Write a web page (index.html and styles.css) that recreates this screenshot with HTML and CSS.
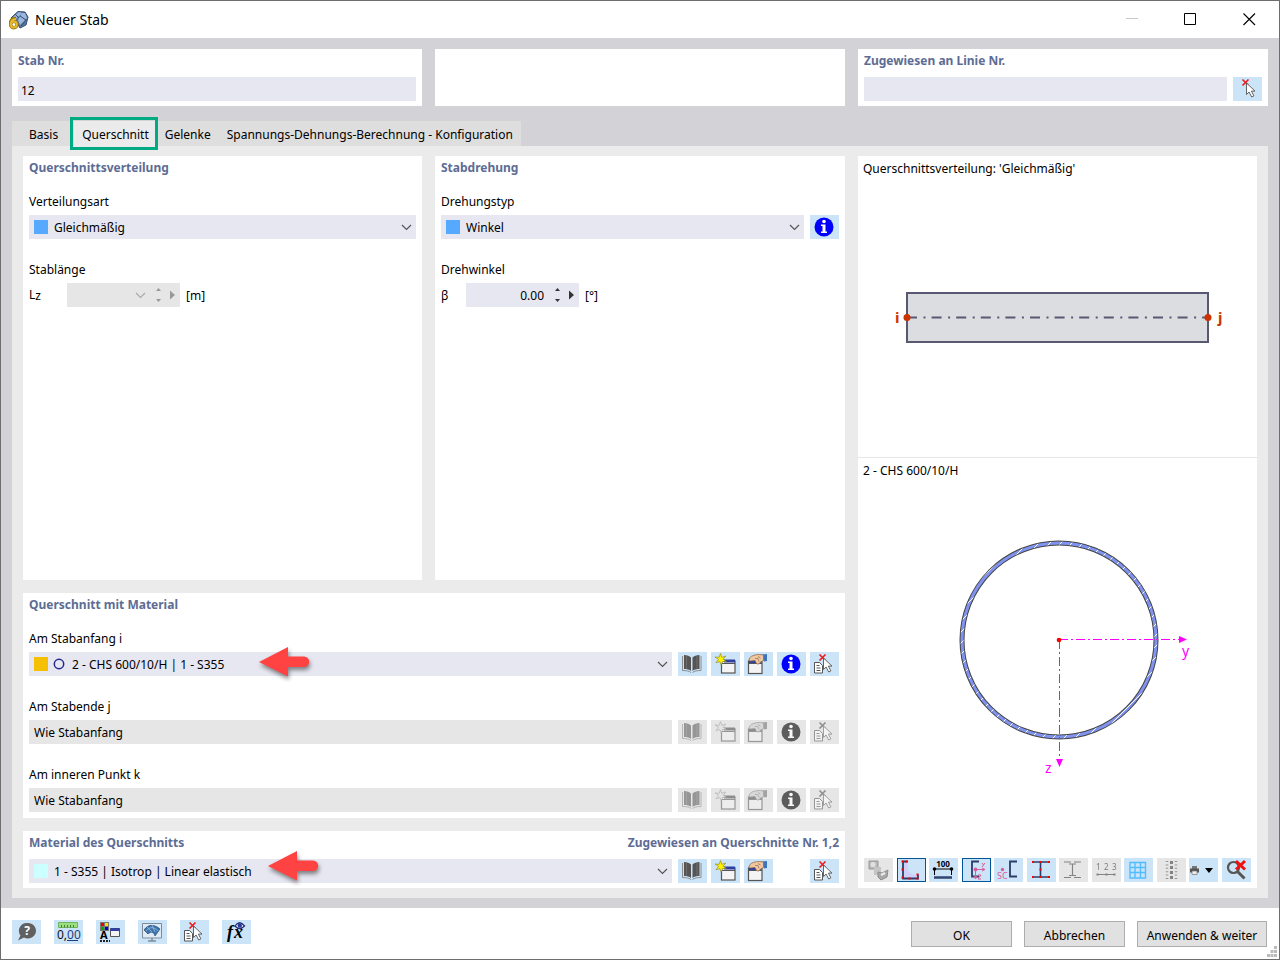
FILE: index.html
```html
<!DOCTYPE html>
<html lang="de">

<head>
    <meta charset="UTF-8">
    <meta name="viewport" content="width=device-width, initial-scale=1.0">
    <title>Neuer Stab</title>

    <link rel="stylesheet" href="styles.css">

</head>

<body>

    <!-- shared icons -->
    <svg class="sprite" aria-hidden="true">
        <symbol id="chevron" viewBox="0 0 11 7">
            <path d="M1 1l4.500 4.500L10 1" fill="none" stroke="currentColor" stroke-width="1.2"/>
        </symbol>

        <symbol id="info" viewBox="0 0 29 24">
            <circle cx="14" cy="12" r="9.500" fill="currentColor"/>
            <circle cx="14" cy="6.500" r="1.800" fill="#fff"/>
            <path d="M11 9.500h4.500v7H17V18h-6v-1.500h1.500V11H11z" fill="#fff"/>
        </symbol>

        <symbol id="book" viewBox="0 0 29 24">
            <path d="M6 3c3 0 5.500 1 7 2.500V19c-1.500-1.500-4-2-7-2zM21.500 3c-3 0-5.500 1-7 2.500V19c1.500-1.500 4-2 7-2z" fill="#555"/>
            <path d="M4.500 4v14.500c4 0 6.500.5 8.500 2M23 4v14.500c-4 0-6.500.5-8.500 2" fill="none" stroke="#777" stroke-width=".8"/>
            <path d="M8.500 4v12.500M19 4v12.500" stroke="#8b8b8b" stroke-width=".5"/>
        </symbol>

        <symbol id="new" viewBox="0 0 29 24">
            <rect x="10.500" y="9" width="13.500" height="12" fill="#f4f4f4" stroke="#555" stroke-width="1.200"/>
            <path d="M13 7.500h11v3H13z" fill="#2f3fa0"/>
            <path d="M10.500 11.500H24" stroke="#555"/>
            <path d="M9.500 1.500l1.300 3.800 3.900-1.300-2.500 3.300 3.200 2-3.800.3-1.400 3.500-1.300-3.500-3.900 1.100 2.500-3.300-3.500-2.400 4.200.3z" fill="#fff200" stroke="#8a7d20" stroke-width=".6"/>
        </symbol>

        <symbol id="edit" viewBox="0 0 29 24">
            <rect x="4.500" y="9" width="13.500" height="12.500" fill="#f4f4f4" stroke="#555" stroke-width="1.200"/>
            <path d="M5 8h12.500v3H5z" fill="#2f3fa0"/>
            <path d="M4.500 11.500H18" stroke="#555"/>
            <path d="M18 2.500l5-.500v7l-3 .5z" fill="#3f74bd"/>
            <path d="M5.500 6c2-2.500 6-3.500 10-3.500l4 .5v5.500l-3 1.500c-.5 2-3 2.500-4 1.500l-1.500-3-4.500.5c-1.500 0-2-1-1-2z" fill="#f1c7a0" stroke="#8f6848" stroke-width=".8"/>
            <path d="M11 6.500h3l1 3M14 4.500l2.500 1.500" fill="none" stroke="#8f6848" stroke-width=".7"/>
        </symbol>

        <symbol id="pick" viewBox="0 0 29 24">
            <path d="M4.500 10.500h5l3 3v7.500h-8z" fill="#fff" stroke="#555"/>
            <path d="M6.500 13.500h3M6.500 16h4M6.500 18.500h4" stroke="#555"/>
            <path d="M9.500 2.500l6 6M15.500 2.500l-6 6" stroke="#f01818" stroke-width="1.600"/>
            <path d="M13.500 6v11.500l2.600-2.500 2.600 5 2.200-1.100-2.500-4.800H22z" fill="#fff" stroke="#555" stroke-width=".9"/>
        </symbol>

        <symbol id="deselect" viewBox="0 0 29 24">
            <path d="M9.500 2.500l6 6M15.500 2.500l-6 6" stroke="#f01818" stroke-width="1.600"/>
            <path d="M13.500 6v11.500l2.600-2.500 2.600 5 2.200-1.100-2.500-4.800H22z" fill="#fff" stroke="#555" stroke-width=".9"/>
        </symbol>

        <symbol id="arrow" viewBox="0 0 54 36">
            <path d="M1 16L30 1v9.500h16a5 5 0 0 1 0 10.500H30v9.500z" fill="#ff4343"/>
        </symbol>
    </svg>

    <div class="window">

        <header class="titlebar">
            <svg class="app-icon" viewBox="0 0 20 20" aria-hidden="true">
                <path d="M2 8L9 1.500l7 .5 3 5-2 8-6 3-3-5z" fill="#56779f" stroke="#344c72"/>
                <path d="M3 8l7-6 3 1-7 7zM13 3l3 0 2 5-7 7-2-5z" fill="#9bb7dd"/>
                <path d="M11 6l6 4-5 6M6 4l4 4" stroke="#344c72" fill="none"/>
                <path d="M7 8.500Q1.500 8 1.500 14.500" fill="none" stroke="#94730d" stroke-width="3.500"/>
                <circle cx="4.800" cy="14.500" r="3.200" fill="none" stroke="#94730d" stroke-width="3.400"/>
                <path d="M7 9Q2 9 1.800 14.500" fill="none" stroke="#e6bb28" stroke-width="2"/>
                <circle cx="4.800" cy="14.500" r="3" fill="none" stroke="#e6bb28" stroke-width="2"/>
            </svg>
            <h1>Neuer Stab</h1>
            <div class="window-controls">
                <button type="button" aria-label="Minimieren" disabled>
                    <svg viewBox="0 0 13 13"><path d="M1 5.500h12" stroke="#c8c8c8"/></svg>
                </button>
                <button type="button" aria-label="Maximieren">
                    <svg viewBox="0 0 13 13"><path d="M.5.500h11v11H.5z" fill="none" stroke="#000"/></svg>
                </button>
                <button type="button" aria-label="Schließen">
                    <svg viewBox="0 0 13 13"><path d="M.5.500l11.500 11.500M12 .5L.5 12" stroke="#000" stroke-width="1.100"/></svg>
                </button>
            </div>
        </header>

        <main class="content">

            <div class="top-row">
                <section class="panel compact">
                    <label class="heading" for="member-no">Stab Nr.</label>
                    <input class="field" id="member-no" type="text" value="12">
                </section>
                <section class="panel compact"></section>
                <section class="panel compact">
                    <label class="heading" for="line-no">Zugewiesen an Linie Nr.</label>
                    <div class="row">
                        <input class="field" id="line-no" type="text">
                        <button type="button" class="icon-btn" aria-label="Linie wählen"><svg><use href="#deselect"/></svg></button>
                    </div>
                </section>
            </div>

            <div class="tabs" role="tablist">
                <button type="button" class="tab" role="tab">Basis</button>
                <button type="button" class="tab active" role="tab" aria-selected="true">Querschnitt<span class="highlight"></span></button>
                <button type="button" class="tab" role="tab">Gelenke</button>
                <button type="button" class="tab" role="tab">Spannungs-Dehnungs-Berechnung - Konfiguration</button>
            </div>

            <div class="tab-page">

                <section class="panel">
                    <h2 class="heading">Querschnittsverteilung</h2>
                    <div class="group">
                        <label for="distribution">Verteilungsart</label>
                        <div class="combo">
                            <span class="swatch blue"></span>
                            <select id="distribution"><option>Gleichmäßig</option></select>
                            <svg class="chevron"><use href="#chevron"/></svg>
                        </div>
                    </div>
                    <div class="group">
                        <span class="label">Stablänge</span>
                        <div class="number-row">
                            <label class="length-label" for="length">L<small>z</small></label>
                            <div class="spin disabled">
                                <input id="length" type="text" disabled>
                                <svg class="chevron"><use href="#chevron"/></svg>
                                <svg class="steps" viewBox="0 0 20 16"><path d="M1 4l2.500-3L6 4zM1 12l2.500 3L6 12zM15 3.500l5 4.500-5 4.500z"/></svg>
                            </div>
                            <span>[m]</span>
                        </div>
                    </div>
                </section>

                <section class="panel">
                    <h2 class="heading">Stabdrehung</h2>
                    <div class="group">
                        <label for="rotation">Drehungstyp</label>
                        <div class="row">
                            <div class="combo">
                                <span class="swatch blue"></span>
                                <select id="rotation"><option>Winkel</option></select>
                                <svg class="chevron"><use href="#chevron"/></svg>
                            </div>
                            <button type="button" class="icon-btn info" aria-label="Info"><svg><use href="#info"/></svg></button>
                        </div>
                    </div>
                    <div class="group">
                        <span class="label">Drehwinkel</span>
                        <div class="number-row">
                            <label class="angle-label" for="angle">β</label>
                            <div class="spin">
                                <input id="angle" type="text" value="0.00">
                                <svg class="steps" viewBox="0 0 20 16"><path d="M1 4l2.500-3L6 4zM1 12l2.500 3L6 12zM15 3.500l5 4.500-5 4.500z"/></svg>
                            </div>
                            <span>[°]</span>
                        </div>
                    </div>
                </section>

                <section class="panel wide">
                    <h2 class="heading">Querschnitt mit Material</h2>
                    <div class="group">
                        <label for="section-i">Am Stabanfang i</label>
                        <div class="row">
                            <div class="combo">
                                <span class="swatch orange"></span>
                                <svg class="ring" viewBox="0 0 12 12"><circle cx="5" cy="6" r="4.700" fill="none" stroke="#26268c" stroke-width="1.500"/></svg>
                                <select id="section-i"><option>2 - CHS 600/10/H | 1 - S355</option></select>
                                <svg class="chevron"><use href="#chevron"/></svg>
                                <svg class="arrow first" viewBox="0 0 54 36"><use href="#arrow"/></svg>
                            </div>
                            <div class="buttons">
                                <button type="button" class="icon-btn" aria-label="Bibliothek"><svg><use href="#book"/></svg></button>
                                <button type="button" class="icon-btn" aria-label="Neu"><svg><use href="#new"/></svg></button>
                                <button type="button" class="icon-btn" aria-label="Bearbeiten"><svg><use href="#edit"/></svg></button>
                                <button type="button" class="icon-btn info" aria-label="Info"><svg><use href="#info"/></svg></button>
                                <button type="button" class="icon-btn" aria-label="Auswählen"><svg><use href="#pick"/></svg></button>
                            </div>
                        </div>
                    </div>
                    <div class="group">
                        <label for="section-j">Am Stabende j</label>
                        <div class="row">
                            <div class="combo disabled">
                                <select id="section-j" disabled><option>Wie Stabanfang</option></select>
                            </div>
                            <div class="buttons">
                                <button type="button" class="icon-btn" aria-label="Bibliothek" disabled><svg><use href="#book"/></svg></button>
                                <button type="button" class="icon-btn" aria-label="Neu" disabled><svg><use href="#new"/></svg></button>
                                <button type="button" class="icon-btn" aria-label="Bearbeiten" disabled><svg><use href="#edit"/></svg></button>
                                <button type="button" class="icon-btn info" aria-label="Info" disabled><svg><use href="#info"/></svg></button>
                                <button type="button" class="icon-btn" aria-label="Auswählen" disabled><svg><use href="#pick"/></svg></button>
                            </div>
                        </div>
                    </div>
                    <div class="group">
                        <label for="section-k">Am inneren Punkt k</label>
                        <div class="row">
                            <div class="combo disabled">
                                <select id="section-k" disabled><option>Wie Stabanfang</option></select>
                            </div>
                            <div class="buttons">
                                <button type="button" class="icon-btn" aria-label="Bibliothek" disabled><svg><use href="#book"/></svg></button>
                                <button type="button" class="icon-btn" aria-label="Neu" disabled><svg><use href="#new"/></svg></button>
                                <button type="button" class="icon-btn" aria-label="Bearbeiten" disabled><svg><use href="#edit"/></svg></button>
                                <button type="button" class="icon-btn info" aria-label="Info" disabled><svg><use href="#info"/></svg></button>
                                <button type="button" class="icon-btn" aria-label="Auswählen" disabled><svg><use href="#pick"/></svg></button>
                            </div>
                        </div>
                    </div>
                </section>

                <section class="panel wide compact">
                    <div class="heading-row">
                        <label class="heading" for="material">Material des Querschnitts</label>
                        <span class="heading">Zugewiesen an Querschnitte Nr. 1,2</span>
                    </div>
                    <div class="row">
                        <div class="combo">
                            <span class="swatch cyan"></span>
                            <select id="material"><option>1 - S355 | Isotrop | Linear elastisch</option></select>
                            <svg class="chevron"><use href="#chevron"/></svg>
                            <svg class="arrow second" viewBox="0 0 54 36"><use href="#arrow"/></svg>
                        </div>
                        <div class="buttons">
                            <button type="button" class="icon-btn" aria-label="Bibliothek"><svg><use href="#book"/></svg></button>
                            <button type="button" class="icon-btn" aria-label="Neu"><svg><use href="#new"/></svg></button>
                            <button type="button" class="icon-btn" aria-label="Bearbeiten"><svg><use href="#edit"/></svg></button>
                            <button type="button" class="icon-btn last" aria-label="Auswählen"><svg><use href="#pick"/></svg></button>
                        </div>
                    </div>
                </section>

                <aside class="preview">
                    <div class="view">
                        <p>Querschnittsverteilung: 'Gleichmäßig'</p>
                        <svg viewBox="0 0 399 277">
                            <rect x="49" y="113" width="301" height="49" fill="#dcdde1" stroke="#585872" stroke-width="2"/>
                            <path d="M49 137.500h301" stroke="#585872" stroke-width="2" stroke-dasharray="10 6.500 2 6.100"/>
                            <circle cx="49" cy="137.500" r="3.500" fill="#cc3300"/>
                            <circle cx="350" cy="137.500" r="3.500" fill="#cc3300"/>
                            <text class="node" x="37" y="143">i</text>
                            <text class="node" x="360" y="143">j</text>
                        </svg>
                    </div>
                    <div class="view">
                        <p>2 - CHS 600/10/H</p>
                        <svg viewBox="0 0 399 350">
                            <defs>
                                <pattern id="hatch" width="11" height="11" patternUnits="userSpaceOnUse">
                                    <path d="M0 0h11v11H0z" fill="#8093f0"/>
                                    <path d="M-1 12L12-1M-1 1l2-2M10 12l2-2" stroke="#fff" stroke-width="1"/>
                                </pattern>
                            </defs>
                            <circle cx="201" cy="158" r="97" fill="none" stroke="#444" stroke-width="5"/>
                            <circle cx="201" cy="158" r="97" fill="none" stroke="url(#hatch)" stroke-width="3"/>
                            <path d="M201 157.500h120M201.500 158v117" stroke="#f0f" stroke-dasharray="9 3 2 3"/>
                            <path d="M321 154l8 3.500-8 3.500zM198 277h7l-3.500 8z" fill="#f0f"/>
                            <circle cx="201" cy="158" r="2.300" fill="#f00"/>
                            <text class="axis" x="324" y="174">y</text>
                            <text class="axis" x="187" y="291">z</text>
                        </svg>
                    </div>

                    <div class="toolbar">
                        <button type="button" class="icon-btn" aria-label="Darstellung" disabled>
                            <svg viewBox="0 0 29 24"><path d="M5 3h9v8H5z" fill="#999" stroke="#555"/><circle cx="9" cy="6.500" r="2.500" fill="#ddd"/><path d="M10 9h7v8h-7z" fill="#aaa"/><path d="M14 14l4 1 6-3-1 7-6 3-3-3z" fill="#777" stroke="#444"/><path d="M17 17l4-2" stroke="#eee" stroke-width="2"/></svg>
                        </button>
                        <button type="button" class="icon-btn on" aria-label="Umriss">
                            <svg viewBox="0 0 29 24"><path d="M6 3.500h4l1 9 4 4h5v4H6z" fill="#cfd0fa"/><path d="M11 3.500H6v17h15v-4" fill="none" stroke="#2c3c68" stroke-width="1.800"/><path d="M4.500 2.500h2v2h-2zm4 0h2v2h-2zm-4 8h2v2h-2zm0 8h2v2h-2zm7 1h2v2h-2zm8 0h2v2h-2zm0-4h2v2h-2z" fill="#f00"/></svg>
                        </button>
                        <button type="button" class="icon-btn" aria-label="Maße">
                            <svg viewBox="0 0 29 24"><text x="14" y="9" text-anchor="middle" class="dim">100</text><path d="M5.500 17v-7M22.500 17v-7M5 11h18" stroke="#000"/><circle cx="5.500" cy="11" r="1.800"/><circle cx="22.500" cy="11" r="1.800"/><path d="M5 19.500h18" stroke="#304570" stroke-width="2.500"/></svg>
                        </button>
                        <button type="button" class="icon-btn on" aria-label="Hauptachsen">
                            <svg viewBox="0 0 29 24"><path d="M17 3.500h-7v15h7" fill="none" stroke="#2c3c68" stroke-width="1.800"/><circle cx="13.500" cy="11.500" r="1.900" fill="#d85f9d"/><path d="M14 11.500h9M13.500 12v8" stroke="#d85f9d"/><path d="M20 10l3 1.500-3 1.500M12 18l1.500 3 1.500-3M20 5l1.500 2L23 5M21.500 7L20 9M16 17h3l-3 4h3" fill="none" stroke="#d85f9d"/></svg>
                        </button>
                        <button type="button" class="icon-btn" aria-label="Schubmittelpunkt">
                            <svg viewBox="0 0 29 24"><path d="M23 3.500h-7v15h7" fill="none" stroke="#2c3c68" stroke-width="1.800"/><circle cx="8.500" cy="11.500" r="1.700" fill="#d85f9d"/><text x="3" y="21" class="sc">SC</text></svg>
                        </button>
                        <button type="button" class="icon-btn" aria-label="Spannungspunkte">
                            <svg viewBox="0 0 29 24"><path d="M6 4h16M6 19h16M13.500 4v15" stroke="#2c3c68" stroke-width="1.600"/><path d="M5 3h2v2H5zm7.500 0h2v2h-2zM21 3h2v2h-2zm-8.500 7.500h2v2h-2zM5 18h2v2H5zm7.500 0h2v2h-2zM21 18h2v2h-2z" fill="#f00"/></svg>
                        </button>
                        <button type="button" class="icon-btn" aria-label="Querschnittsteile" disabled>
                            <svg viewBox="0 0 29 24"><path d="M5 4h7M15 4h7M5 19.500h7M15 19.500h7M10 6h7M10 17.500h7M13.500 6v11.500" stroke="#333" stroke-width="1.200"/></svg>
                        </button>
                        <button type="button" class="icon-btn" aria-label="Nummerierung" disabled>
                            <svg viewBox="0 0 29 24"><text x="4" y="12" class="nums">1</text><text x="12" y="12" class="nums">2</text><text x="20" y="12" class="nums">3</text><path d="M5 16.500h18" stroke="#333"/><path d="M4.500 15.500h2v2h-2zm9 0h2v2h-2zm8 0h2v2h-2z" fill="#333"/></svg>
                        </button>
                        <button type="button" class="icon-btn" aria-label="Raster">
                            <svg viewBox="0 0 29 24"><path d="M6 4.500h15.500v15.500H6zM11 4.500v15.500M16.500 4.500v15.500M6 9.500h15.500M6 14.500h15.500" fill="none" stroke="#51bdff" stroke-width="1.400"/></svg>
                        </button>
                        <button type="button" class="icon-btn" aria-label="Werte" disabled>
                            <svg viewBox="0 0 29 24"><path d="M14.500 3v18" stroke="#333" stroke-width="3" stroke-dasharray="3 2"/><path d="M10 3v18M19 3v18" stroke="#555" stroke-width="2.500" stroke-dasharray="1 2.400"/></svg>
                        </button>
                        <button type="button" class="icon-btn" aria-label="Drucken">
                            <svg viewBox="0 0 29 24"><path d="M3 8h5v3H3z" fill="#777"/><path d="M1 10.500h9v4H1z" fill="#555"/><path d="M3 13h5v3.500H3z" fill="#eee" stroke="#777" stroke-width=".7"/><path d="M16 10h8l-4 5z" fill="#000"/></svg>
                        </button>
                        <button type="button" class="icon-btn" aria-label="Zoom zurücksetzen">
                            <svg viewBox="0 0 29 24"><circle cx="11.500" cy="9.500" r="5.500" fill="none" stroke="#555" stroke-width="2.200"/><path d="M15.500 13.500l7 7" stroke="#555" stroke-width="3"/><path d="M14 3l9 8.500M23 3l-9 8.500" stroke="#f01010" stroke-width="3"/></svg>
                        </button>
                    </div>
                </aside>

            </div>
        </main>

        <footer class="footer">
            <button type="button" class="icon-btn" aria-label="Hilfe">
                <svg viewBox="0 0 29 24"><path d="M15 3a8 7.800 0 1 1-3 14.500L6 20.500l2.500-5A8 7.800 0 0 1 15 3z" fill="#606060"/><text x="15" y="15" text-anchor="middle" class="help">?</text></svg>
            </button>
            <button type="button" class="icon-btn" aria-label="Einheiten">
                <svg viewBox="0 0 29 24"><path d="M4.500 2.500h19v5h-19z" fill="#9ae080" stroke="#70b35c"/><path d="M7.500 5v2.500M10.500 5v2.500M13.500 5v2.500M16.500 5v2.500M19.500 5v2.500" stroke="#4c7b3e"/><text x="3" y="19" class="units">0,<tspan fill="#203f80">00</tspan></text><path d="M13 20.500h11" stroke="#203f80"/></svg>
            </button>
            <button type="button" class="icon-btn" aria-label="Anzeige">
                <svg viewBox="0 0 29 24"><path d="M4 2h9v9H4z" fill="#777"/><path d="M5 3h3v3H5z" fill="#e00"/><path d="M9 3h3v3H9z" fill="#fd0"/><path d="M5 7h3v3H5z" fill="#0a0"/><path d="M9 7h3v3H9z" fill="#00d"/><text x="4" y="19" class="letter">A</text><path d="M4 21h10" stroke="#222" stroke-width="2" stroke-dasharray="2 1"/><path d="M14.500 8.500h9v8h-9z" fill="#f4f4f4" stroke="#555"/><path d="M14.500 8h9v3h-9z" fill="#2f3fa0"/></svg>
            </button>
            <button type="button" class="icon-btn" aria-label="Ansicht">
                <svg viewBox="0 0 29 24"><path d="M4.500 3.500h19v14.500h-19z" fill="#deebf7" stroke="#7d8b99"/><path d="M14 18v3M10 21h8" stroke="#7d8b99" stroke-width="1.500"/><path d="M6 10c4-6 10-6 16-1l-5 7c-1-4-4-5-7-2z" fill="#3d75ad" stroke="#274c75" stroke-width=".7"/><path d="M9 7l5 5M14 5l3 7M8 11c4-5 8-4 12 0" fill="none" stroke="#a8c7e5" stroke-width=".7"/></svg>
            </button>
            <button type="button" class="icon-btn" aria-label="Auswählen"><svg><use href="#pick"/></svg></button>
            <button type="button" class="icon-btn" aria-label="Formel">
                <svg viewBox="0 0 29 24"><text x="5" y="18" class="fx">f</text><text x="12" y="18" class="fx">x</text><path d="M13 6q4.500-6.500 9.500 0q-5 5-9.500 0z" fill="#fff" stroke="#222a70" stroke-width="1.300"/><circle cx="17.800" cy="5.500" r="2.200" fill="#26389a"/></svg>
            </button>

            <div class="actions">
                <button type="button">OK</button>
                <button type="button">Abbrechen</button>
                <button type="button" class="long">Anwenden &amp; weiter</button>
            </div>
            <svg class="grip" viewBox="0 0 10 11" aria-hidden="true"><path d="M7 0h3v3H7zM3.500 4h3v3h-3zM7 4h3v3H7zM0 8h3v3H0zM3.500 8h3v3h-3zM7 8h3v3H7z" fill="#bbb"/></svg>
        </footer>

    </div>

</body>
</html>
```
FILE: styles.css
```css
:root {
    --field: #e6e7f1;
    --disabled: #e6e6e6;
    --button: #cce4f7;
    --heading: #5d6c94;
}

* {
    padding: 0;
    margin: 0;
    box-sizing: border-box;
}

body {
    font-family: "Noto Sans", "Open Sans", sans-serif;
    font-size: 12px;
    color: #000;
}

button,
input,
select {
    font: inherit;
    color: inherit;
    border: none;
    background: none;
}

svg {
    display: block;
}

.sprite {
    position: absolute;
    width: 0;
    height: 0;
}

.window {
    min-height: 100vh;
    display: flex;
    flex-direction: column;
    border: 1px solid #6d6d70;
    background: #fff;
}

/* title bar */
.titlebar {
    display: flex;
    align-items: center;
    height: 37px;
    padding-left: 8px;
}

.app-icon {
    width: 20px;
    height: 20px;
    margin-right: 6px;
}

.titlebar h1 {
    font-size: 14px;
    font-weight: normal;
}

.window-controls {
    display: flex;
    margin-left: auto;
}

.window-controls button {
    width: 59px;
    height: 36px;
    display: flex;
    align-items: center;
    justify-content: center;
}

.window-controls svg {
    width: 13px;
    height: 13px;
}

/* content */
.content {
    flex: 1;
    display: flex;
    flex-direction: column;
    padding: 11px 11px 10px;
    background: #d2d2d7;
}

.top-row {
    display: grid;
    grid-template-columns: repeat(3, 1fr);
    gap: 13px;
}

.panel {
    background: #fff;
    padding: 0 6px 6px;
}

.panel.compact {
    padding-bottom: 5px;
}

.heading {
    display: block;
    height: 24px;
    margin-bottom: 10px;
    line-height: 24px;
    font-size: 12px;
    font-weight: bold;
    color: var(--heading);
}

.compact .heading {
    margin-bottom: 4px;
}

.heading-row {
    display: flex;
    justify-content: space-between;
}

.group + .group {
    margin-top: 19px;
}

.group > label,
.group > .label {
    display: block;
    padding-bottom: 2px;
    line-height: 23px;
}

.row {
    display: flex;
    gap: 6px;
}

.field {
    width: 100%;
    height: 24px;
    padding: 2px 3px 0;
    background: var(--field);
}

.row .field {
    flex: 1;
    min-width: 0;
}

.combo {
    position: relative;
    flex: 1;
    display: flex;
    align-items: center;
    gap: 6px;
    height: 24px;
    padding: 0 4px 0 5px;
    background: var(--field);
}

.combo select {
    flex: 1;
    min-width: 0;
    height: 24px;
    appearance: none;
    opacity: 1;
}

.disabled {
    background: var(--disabled);
}

.chevron {
    width: 11px;
    height: 7px;
    color: #555;
    pointer-events: none;
}

.swatch {
    width: 14px;
    height: 14px;
}

.blue {
    background: #55aaff;
}

.orange {
    background: #f5c000;
}

.cyan {
    background: #ccffff;
}

.ring {
    width: 12px;
    height: 12px;
    overflow: visible;
}

.buttons {
    display: flex;
    gap: 4px;
    width: 161px;
}

.buttons .last {
    margin-left: auto;
}

.icon-btn {
    flex: none;
    width: 29px;
    height: 24px;
    background: var(--button);
}

.icon-btn svg {
    width: 29px;
    height: 24px;
}

.icon-btn.info {
    color: #0000ff;
}

.icon-btn:disabled {
    background: var(--disabled);
}

.icon-btn:disabled svg {
    filter: grayscale(1);
    opacity: .55;
}

.icon-btn.info:disabled {
    color: #222;
}

.icon-btn.info:disabled svg {
    opacity: .7;
}

.icon-btn.on {
    box-shadow: inset 0 0 0 1px #005499;
}

/* red pointers over the two lists */
.arrow {
    position: absolute;
    width: 54px;
    height: 36px;
    pointer-events: none;
    filter: drop-shadow(1px 3px 2px rgba(0, 0, 0, .45));
}

.arrow.first {
    left: 229px;
    top: -6px;
}

.arrow.second {
    left: 238px;
    top: -9px;
}

/* number boxes */
.number-row {
    display: flex;
    align-items: center;
}

.number-row small {
    font-size: 12px;
    vertical-align: -1px;
}

.length-label {
    width: 38px;
}

.angle-label {
    width: 25px;
}

.spin {
    display: flex;
    align-items: center;
    width: 113px;
    height: 24px;
    margin-right: 6px;
    padding-right: 5px;
    background: var(--field);
}

.spin input {
    flex: 1;
    min-width: 0;
    height: 24px;
    padding-right: 10px;
    text-align: right;
}

.steps {
    width: 20px;
    height: 16px;
    fill: #333;
}

.spin.disabled {
    background: var(--disabled);
}

.spin.disabled .chevron {
    margin-right: 9px;
    color: #aaa;
}

.spin.disabled .steps {
    fill: #999;
}

/* tabs */
.tabs {
    display: flex;
    align-self: flex-start;
    height: 25px;
    margin-top: 15px;
    padding-left: 9px;
    background: #dedede;
}

.tab {
    padding: 2px 8px 0;
}

.tab.active {
    position: relative;
    margin-left: 8px;
    background: #ebebeb;
}

.highlight {
    position: absolute;
    inset: -4px -1px -4px -4px;
    border: 3px solid #00ab84;
}

.tab-page {
    flex: 1;
    display: grid;
    grid-template-columns: 399fr 410fr 399fr;
    grid-template-rows: 1fr auto auto;
    gap: 13px;
    padding: 10px 11px;
    background: #ebebeb;
}

.wide {
    grid-column: 1 / 3;
}

/* preview */
.preview {
    grid-column: 3;
    grid-row: 1 / 4;
    display: flex;
    flex-direction: column;
    background: #fff;
}

.view + .view {
    border-top: 1px solid #e6e6e6;
}

.view p {
    height: 24px;
    padding-left: 5px;
    line-height: 26px;
}

.view svg {
    width: 100%;
}

.node {
    font-size: 15px;
    font-weight: bold;
    fill: #cc3300;
}

.axis {
    font-size: 14px;
    fill: #ff00ff;
}

.toolbar {
    display: flex;
    justify-content: space-between;
    margin-top: auto;
    padding: 0 6px 6px;
}

.dim {
    font-size: 8px;
    font-weight: bold;
}

.sc {
    font-size: 9px;
    fill: #d85f9d;
}

.nums {
    font-size: 8px;
    fill: #222;
}

/* footer */
.footer {
    position: relative;
    display: flex;
    align-items: flex-start;
    gap: 13px;
    height: 51px;
    padding: 12px 12px 0 11px;
}

.help {
    font-size: 12px;
    font-weight: bold;
    fill: #fff;
}

.units {
    font-size: 12px;
    fill: #111;
}

.letter {
    font-size: 11px;
    font-weight: bold;
}

.fx {
    font-family: "Liberation Serif", serif;
    font-size: 18px;
    font-style: italic;
    font-weight: bold;
}

.actions {
    display: flex;
    gap: 12px;
    margin: 1px 0 0 auto;
}

.actions button {
    width: 101px;
    height: 26px;
    padding-top: 2px;
    border: 1px solid #adadad;
    background: #e1e1e1;
}

.actions .long {
    width: 130px;
}

.grip {
    position: absolute;
    right: 2px;
    bottom: 2px;
    width: 10px;
    height: 11px;
}
```
